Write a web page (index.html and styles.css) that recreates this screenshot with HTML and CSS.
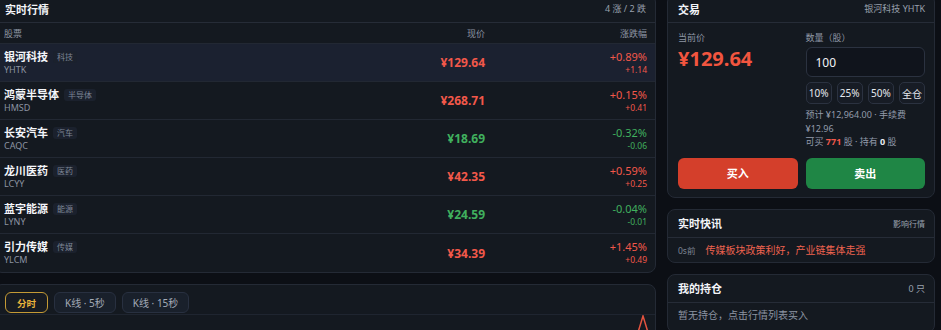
FILE: index.html
```html
<!DOCTYPE html>
<html lang="zh-CN">
<head>
    <meta charset="UTF-8">
    <meta name="viewport" content="width=device-width, initial-scale=1.0">
    <title>模拟交易</title>
    <link rel="stylesheet" href="styles.css">
</head>
<body>
    <div class="app">
        <div class="col-main">
            <div class="card market">
                <div class="card-head">
                    <h3>实时行情</h3>
                    <span class="head-note">4 涨 / 2 跌</span>
                </div>
                <div class="table-head">
                    <span>股票</span>
                    <span class="right">现价</span>
                    <span class="right">涨跌幅</span>
                </div>

                <div class="row active">
                    <div class="stock">
                        <div class="name-line"><span class="name">银河科技</span><span class="tag">科技</span></div>
                        <div class="code">YHTK</div>
                    </div>
                    <div class="price up">¥129.64</div>
                    <div class="change up"><div class="pct">+0.89%</div><div class="diff">+1.14</div></div>
                </div>
                <div class="row">
                    <div class="stock">
                        <div class="name-line"><span class="name">鸿蒙半导体</span><span class="tag">半导体</span></div>
                        <div class="code">HMSD</div>
                    </div>
                    <div class="price up">¥268.71</div>
                    <div class="change up"><div class="pct">+0.15%</div><div class="diff">+0.41</div></div>
                </div>
                <div class="row">
                    <div class="stock">
                        <div class="name-line"><span class="name">长安汽车</span><span class="tag">汽车</span></div>
                        <div class="code">CAQC</div>
                    </div>
                    <div class="price down">¥18.69</div>
                    <div class="change down"><div class="pct">-0.32%</div><div class="diff">-0.06</div></div>
                </div>
                <div class="row">
                    <div class="stock">
                        <div class="name-line"><span class="name">龙川医药</span><span class="tag">医药</span></div>
                        <div class="code">LCYY</div>
                    </div>
                    <div class="price up">¥42.35</div>
                    <div class="change up"><div class="pct">+0.59%</div><div class="diff">+0.25</div></div>
                </div>
                <div class="row">
                    <div class="stock">
                        <div class="name-line"><span class="name">蓝宇能源</span><span class="tag">能源</span></div>
                        <div class="code">LYNY</div>
                    </div>
                    <div class="price down">¥24.59</div>
                    <div class="change down"><div class="pct">-0.04%</div><div class="diff">-0.01</div></div>
                </div>
                <div class="row">
                    <div class="stock">
                        <div class="name-line"><span class="name">引力传媒</span><span class="tag">传媒</span></div>
                        <div class="code">YLCM</div>
                    </div>
                    <div class="price up">¥34.39</div>
                    <div class="change up"><div class="pct">+1.45%</div><div class="diff">+0.49</div></div>
                </div>
            </div>

            <div class="card chart-card">
                <div class="tabs">
                    <button class="tab active">分时</button>
                    <button class="tab">K线 · 5秒</button>
                    <button class="tab">K线 · 15秒</button>
                </div>
                <div class="chart">
                    <svg width="660" height="60" viewBox="0 0 660 60">
                        <polyline points="630,60 648,1 666,60" fill="none" stroke="#e3533f" stroke-width="1.5"/>
                    </svg>
                </div>
            </div>
        </div>

        <div class="col-side">
            <div class="card trade">
                <div class="card-head">
                    <h3>交易</h3>
                    <span class="head-note">银河科技 YHTK</span>
                </div>
                <div class="trade-body">
                    <div class="now">
                        <div class="label">当前价</div>
                        <div class="big-price">¥129.64</div>
                    </div>
                    <div class="qty">
                        <div class="label">数量（股）</div>
                        <input class="qty-input" type="text" value="100">
                        <div class="quick">
                            <button>10%</button>
                            <button>25%</button>
                            <button>50%</button>
                            <button>全仓</button>
                        </div>
                        <div class="info">
                            预计 ¥12,964.00 · 手续费 ¥12.96<br>
                            可买 <b class="up">771</b> 股 · 持有 <b>0</b> 股
                        </div>
                    </div>
                    <button class="btn buy">买入</button>
                    <button class="btn sell">卖出</button>
                </div>
            </div>

            <div class="card news">
                <div class="card-head">
                    <h3>实时快讯</h3>
                    <span class="head-note small">影响行情</span>
                </div>
                <div class="news-item">
                    <span class="ago">0s前</span>
                    <span class="news-text">传媒板块政策利好，产业链集体走强</span>
                </div>
            </div>

            <div class="card holdings">
                <div class="card-head">
                    <h3>我的持仓</h3>
                    <span class="head-note">0 只</span>
                </div>
                <div class="empty">暂无持仓，点击行情列表买入</div>
            </div>
        </div>
    </div>
</body>
</html>
```

FILE: styles.css
```css
html, body {
    margin: 0;
    padding: 0;
    height: 100%;
    overflow: hidden;
}

body {
    background-color: #0c0f15;
    color: #e9edf3;
    font-family: 'Noto Sans', 'Noto Sans CJK SC', sans-serif;
}

.app {
    display: grid;
    grid-template-columns: 1fr 268px;
    column-gap: 11px;
    margin: -6px 6px 0 -6px;
    align-items: start;
}

.col-main, .col-side {
    display: flex;
    flex-direction: column;
    gap: 11px;
}

.card {
    background-color: #141920;
    border: 1px solid #242a35;
    border-radius: 8px;
    overflow: hidden;
}

.card-head {
    height: 28px;
    box-sizing: border-box;
    display: flex;
    justify-content: space-between;
    align-items: center;
    padding: 0 9px 0 10px;
    border-bottom: 1px solid #262c37;
}

.card-head h3 {
    margin: 0;
    font-size: 11px;
    font-weight: 700;
    color: #f2f4f8;
}

.head-note {
    font-size: 9px;
    color: #98a0ad;
}

.head-note.small {
    font-size: 8px;
}

/* 行情表 */
.table-head, .row {
    display: grid;
    grid-template-columns: 1fr 140px 162px;
    padding: 0 8px 0 9px;
    align-items: center;
    border-bottom: 1px solid #222833;
    box-sizing: border-box;
}

.table-head {
    height: 21px;
    font-size: 9px;
    color: #8e96a4;
}

.right {
    text-align: right;
}

.row {
    height: 38px;
}

.row:last-child {
    border-bottom: none;
}

.row.active {
    background-color: #1b2130;
}

.name-line {
    display: flex;
    align-items: center;
    line-height: 14px;
}

.name {
    font-size: 11px;
    font-weight: 700;
    color: #f4f6fa;
}

.tag {
    margin-left: 5px;
    padding: 0 4px;
    font-size: 8px;
    line-height: 12px;
    color: #7d8696;
    background-color: #1b212d;
    border-radius: 3px;
}

.code {
    font-size: 9px;
    line-height: 12px;
    color: #8c94a2;
}

.price {
    text-align: right;
    font-size: 12px;
    font-weight: 700;
}

.change {
    text-align: right;
}

.pct {
    font-size: 11px;
    line-height: 14px;
}

.diff {
    font-size: 8.5px;
    line-height: 12px;
}

.up {
    color: #f2584a;
}

.down {
    color: #40b05e;
}

/* 图表 */
.tabs {
    display: flex;
    gap: 6px;
    padding: 7px 10px 0 10px;
}

.tab {
    height: 21px;
    padding: 0 10px;
    font-family: inherit;
    font-size: 10px;
    color: #a4abb8;
    background-color: #19202b;
    border: 1px solid #283040;
    border-radius: 6px;
}

.tab.active {
    color: #e9b43c;
    font-weight: 700;
    font-size: 9.5px;
    background-color: #171b22;
    border-color: #c49a35;
    padding: 0 11px;
}

.chart {
    margin-top: 1px;
    border-top: 1px solid #1f2530;
    height: 60px;
}

.chart svg {
    display: block;
}

/* 交易 */
.trade-body {
    display: grid;
    grid-template-columns: 1fr 1fr;
    column-gap: 8px;
    row-gap: 9px;
    padding: 8px 9px 8px 10px;
}

.label {
    font-size: 9px;
    line-height: 13px;
    color: #8f97a5;
}

.big-price {
    margin-top: 2px;
    font-size: 20px;
    line-height: 26px;
    font-weight: 700;
    color: #f2553f;
}

.qty-input {
    display: block;
    width: 100%;
    height: 30px;
    box-sizing: border-box;
    margin-top: 3px;
    padding: 0 9px;
    font-family: inherit;
    font-size: 12px;
    color: #f1f3f7;
    background-color: #10141c;
    border: 1px solid #2b3240;
    border-radius: 6px;
    outline: none;
}

.quick {
    display: grid;
    grid-template-columns: repeat(4, 1fr);
    gap: 5px;
    margin-top: 5px;
}

.quick button {
    height: 22px;
    padding: 0;
    font-family: inherit;
    font-size: 10px;
    color: #e6e9ef;
    background-color: #171c25;
    border: 1px solid #2b3240;
    border-radius: 5px;
}

.info {
    margin-top: 4px;
    font-size: 9px;
    line-height: 13.5px;
    color: #939bab;
}

.info b {
    font-weight: 700;
    color: #e8ebf1;
}

.info b.up {
    color: #f2584a;
}

.btn {
    height: 31px;
    border: none;
    border-radius: 6px;
    font-family: inherit;
    font-size: 11px;
    font-weight: 700;
    color: #ffffff;
}

.buy {
    background-color: #d43f2b;
}

.sell {
    background-color: #1f8645;
}

/* 快讯 */
.news-item {
    display: flex;
    align-items: center;
    gap: 10px;
    height: 24px;
    padding: 0 10px;
}

.ago {
    font-size: 8.5px;
    color: #7f8796;
}

.news-text {
    font-size: 10px;
    color: #f0634f;
}

/* 持仓 */
.empty {
    padding: 5px 10px 10px 10px;
    font-size: 10px;
    line-height: 14px;
    color: #8c94a2;
}
```
